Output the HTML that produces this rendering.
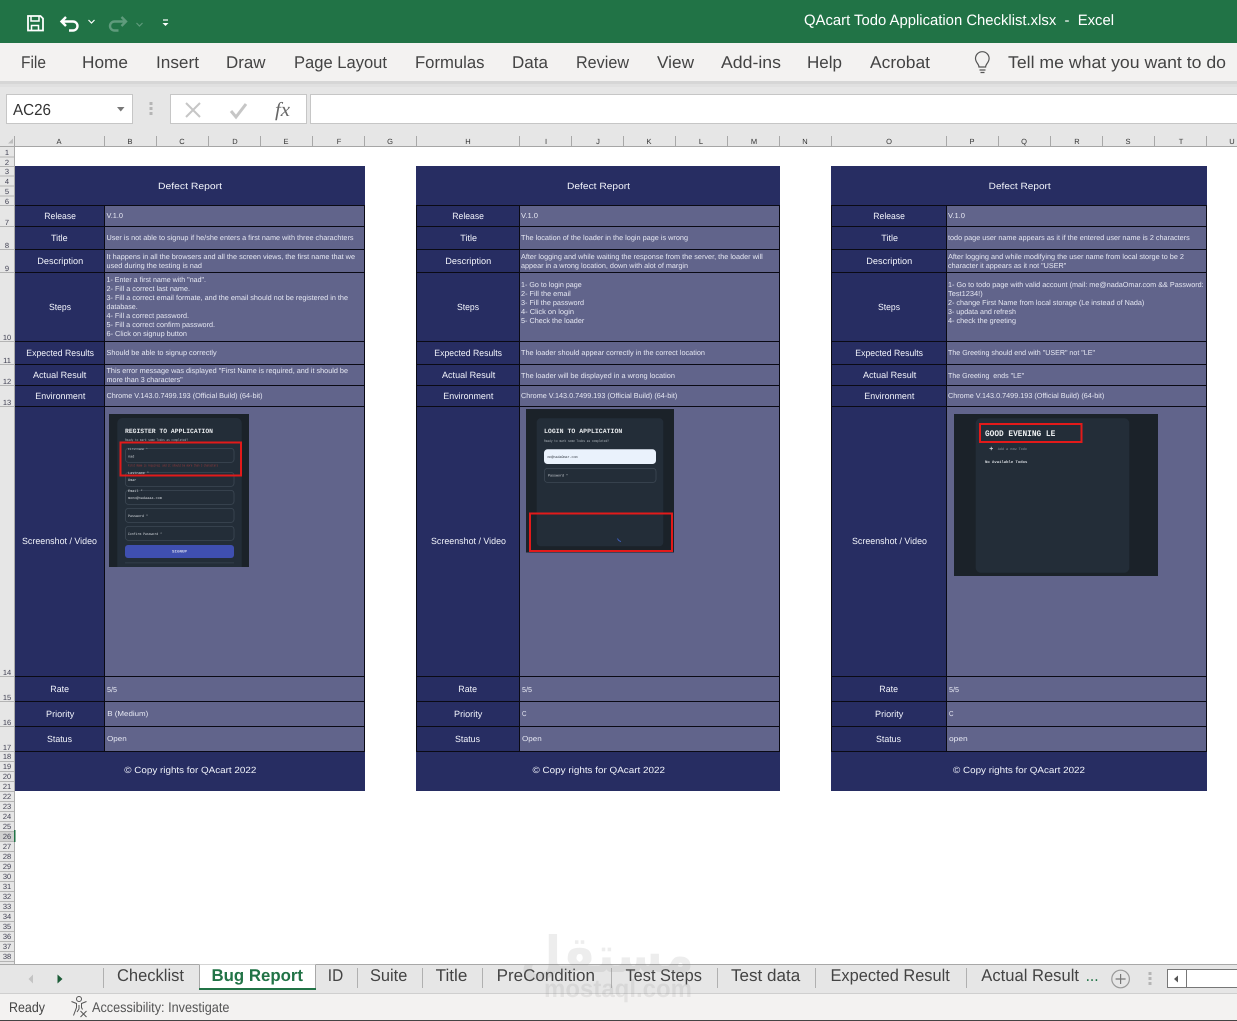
<!DOCTYPE html>
<html lang="en"><head><meta charset="utf-8"><title>QAcart Todo Application Checklist.xlsx - Excel</title>
<style>
html,body{margin:0;padding:0;width:1237px;height:1021px;overflow:hidden;background:#fff}
svg{display:block;font-family:"Liberation Sans",sans-serif;text-rendering:geometricPrecision}
.r{font-size:17px;fill:#444}
.t{font-size:17px;fill:#444}
.c{font-size:7.5px;fill:#333;text-anchor:middle}
.n{font-size:7.5px;fill:#3e3e50;text-anchor:middle}
.v{font-size:7.2px;fill:#e6e8f3}
.l{font-size:9px;fill:#f2f4fb}
.m{font-family:"Liberation Mono",monospace}
</style></head><body>
<svg xmlns="http://www.w3.org/2000/svg" width="1237" height="1021" viewBox="0 0 1237 1021" lengthAdjust="spacingAndGlyphs">
<rect width="1237" height="1021" fill="#fff"/>
<!-- title bar -->
<rect width="1237" height="43" fill="#217346"/>
<g fill="none" stroke="#fff">
<path d="M28 16h12.500l2.500 2.500v12h-15z" stroke-width="1.800"/>
<path d="M31 16v5h8v-5" stroke-width="1.500"/>
<path d="M31.500 31v-5.500h7V31" stroke-width="1.500"/>
<path d="M66 17l-4.500 4.500 4.500 4.500M62 21.500h11a4.500 4.500 0 0 1 0 9h-4" stroke-width="2.400"/>
<path d="M88.500 20l3 3 3-3" stroke-width="1.200"/>
<path d="M121.500 17l4.500 4.500-4.500 4.500M125.500 21.500h-11a4.500 4.500 0 0 0 0 9h4" stroke="#5f9b7c" stroke-width="2.400"/>
<path d="M136.500 23l3 3 3-3" stroke="#5f9b7c" stroke-width="1.200"/>
<path d="M163 20h5" stroke-width="1.200"/>
</g>
<path d="M162.500 23h6l-3 3z" fill="#fff"/>
<text x="804" y="25" font-size="15" fill="#fff" textLength="310" lengthAdjust="spacingAndGlyphs" xml:space="preserve">QAcart Todo Application Checklist.xlsx  -  Excel</text>
<!-- ribbon tabs -->
<rect y="43" width="1237" height="38" fill="#f3f2f1"/>
<rect y="81" width="1237" height="66" fill="#e6e6e6"/>
<rect y="81" width="1237" height="3" fill="#d6d6d6"/>
<rect y="84" width="1237" height="3" fill="#e0e0e0"/>
<g class="r">
<text class="r" x="21" y="68" textLength="25" lengthAdjust="spacingAndGlyphs">File</text>
<text class="r" x="82" y="68" textLength="46" lengthAdjust="spacingAndGlyphs">Home</text>
<text class="r" x="156" y="68" textLength="43" lengthAdjust="spacingAndGlyphs">Insert</text>
<text class="r" x="226" y="68" textLength="39.500" lengthAdjust="spacingAndGlyphs">Draw</text>
<text class="r" x="294" y="68" textLength="93" lengthAdjust="spacingAndGlyphs">Page Layout</text>
<text class="r" x="415" y="68" textLength="69.500" lengthAdjust="spacingAndGlyphs">Formulas</text>
<text class="r" x="512" y="68" textLength="36" lengthAdjust="spacingAndGlyphs">Data</text>
<text class="r" x="576" y="68" textLength="53" lengthAdjust="spacingAndGlyphs">Review</text>
<text class="r" x="657" y="68" textLength="37" lengthAdjust="spacingAndGlyphs">View</text>
<text class="r" x="721" y="68" textLength="60" lengthAdjust="spacingAndGlyphs">Add-ins</text>
<text class="r" x="807" y="68" textLength="35" lengthAdjust="spacingAndGlyphs">Help</text>
<text class="r" x="870" y="68" textLength="60" lengthAdjust="spacingAndGlyphs">Acrobat</text>
<text class="r" x="1008" y="68" textLength="218" lengthAdjust="spacingAndGlyphs" fill="#555">Tell me what you want to do</text>
</g>
<path d="M979 67c0-3-3.500-4.500-3.500-8.500a6.800 6.800 0 0 1 13.600 0c0 4-3.500 5.500-3.500 8.500zM979.500 70h6M980.500 72.500h4" fill="none" stroke="#555" stroke-width="1.200"/>
<!-- formula bar -->
<rect x="6.500" y="94.500" width="126" height="29" fill="#fff" stroke="#c6c6c6"/>
<text x="13" y="115" font-size="16" fill="#333" textLength="38" lengthAdjust="spacingAndGlyphs">AC26</text>
<path d="M117 107h7.500l-3.750 4.500z" fill="#777"/>
<path d="M149.500 102h3v3h-3zM149.500 107h3v3h-3zM149.500 112h3v3h-3z" fill="#b5b5b5"/>
<rect x="170.500" y="94.500" width="136" height="29" fill="#fff" stroke="#c6c6c6"/>
<rect x="310.500" y="94.500" width="927" height="29" fill="#fff" stroke="#c6c6c6"/>
<path d="M186 103l14 14M200 103l-14 14" stroke="#c6c6c6" stroke-width="2" fill="none"/>
<path d="M231 111l5 6 10-13" stroke="#c6c6c6" stroke-width="3" fill="none"/>
<text x="275" y="116" font-family="Liberation Serif" font-style="italic" font-size="20" fill="#666" textLength="15" lengthAdjust="spacingAndGlyphs">fx</text>
<!-- column header -->
<rect y="135" width="1237" height="12" fill="#e6e6e6"/>
<path d="M0 146.500H1237" stroke="#a6a6a6"/>
<path d="M8 143.500h5v-5z" fill="#bdbdbd"/>
<path d="M14.500 136v10M104.500 136v10M156.500 136v10M208.500 136v10M260.500 136v10M312.500 136v10M364.500 136v10M416.500 136v10M519.500 136v10M571.500 136v10M623.500 136v10M675.500 136v10M727.500 136v10M779.500 136v10M831.500 136v10M946.500 136v10M998.500 136v10M1050.500 136v10M1102.500 136v10M1154.500 136v10M1206.500 136v10" stroke="#a8a8a8"/>
<text class="c" x="59" y="144">A</text><text class="c" x="130" y="144">B</text><text class="c" x="182" y="144">C</text><text class="c" x="235" y="144">D</text><text class="c" x="286" y="144">E</text><text class="c" x="339" y="144">F</text><text class="c" x="390" y="144">G</text><text class="c" x="468" y="144">H</text><text class="c" x="546" y="144">I</text><text class="c" x="598" y="144">J</text><text class="c" x="649" y="144">K</text><text class="c" x="701" y="144">L</text><text class="c" x="754" y="144">M</text><text class="c" x="805" y="144">N</text><text class="c" x="889" y="144">O</text><text class="c" x="972" y="144">P</text><text class="c" x="1024" y="144">Q</text><text class="c" x="1077" y="144">R</text><text class="c" x="1128" y="144">S</text><text class="c" x="1181" y="144">T</text><text class="c" x="1232" y="144">U</text>
<!-- row header -->
<rect y="147" width="15" height="817" fill="#e6e6e6"/>
<rect y="832" width="14" height="10" fill="#d0d0d0"/>
<path d="M14.500 147V964" stroke="#ababab"/>
<path d="M0 157h14M0 166.500h14M0 176h14M0 186h14M0 196h14M0 205.500h14M0 226.500h14M0 249.500h14M0 272.500h14M0 341.500h14M0 364.500h14M0 385.500h14M0 406.500h14M0 676.500h14M0 701.500h14M0 726.500h14M0 751.500h14M0 761.500h14M0 771.500h14M0 781.500h14M0 791.500h14M0 801.500h14M0 811.500h14M0 821.500h14M0 831.500h14M0 841.500h14M0 851.500h14M0 861.500h14M0 871.500h14M0 881.500h14M0 891.500h14M0 901.500h14M0 911.500h14M0 921.500h14M0 931.500h14M0 941.500h14M0 951.500h14M0 961.500h14" stroke="#b4b4b4"/>
<rect x="14" y="830" width="1.500" height="12" fill="#217346"/>
<g>
<text class="n" x="7" y="155">1</text><text class="n" x="7" y="165">2</text><text class="n" x="7" y="174">3</text><text class="n" x="7" y="184">4</text><text class="n" x="7" y="194">5</text><text class="n" x="7" y="204">6</text><text class="n" x="7" y="225">7</text><text class="n" x="7" y="248">8</text><text class="n" x="7" y="271">9</text><text class="n" x="7" y="340">10</text><text class="n" x="7" y="363">11</text><text class="n" x="7" y="384">12</text><text class="n" x="7" y="405">13</text><text class="n" x="7" y="675">14</text><text class="n" x="7" y="700">15</text><text class="n" x="7" y="725">16</text><text class="n" x="7" y="750">17</text><text class="n" x="7" y="759">18</text><text class="n" x="7" y="769">19</text><text class="n" x="7" y="779">20</text><text class="n" x="7" y="789">21</text><text class="n" x="7" y="799">22</text><text class="n" x="7" y="809">23</text><text class="n" x="7" y="819">24</text><text class="n" x="7" y="829">25</text><text class="n" x="7" y="839">26</text><text class="n" x="7" y="849">27</text><text class="n" x="7" y="859">28</text><text class="n" x="7" y="869">29</text><text class="n" x="7" y="879">30</text><text class="n" x="7" y="889">31</text><text class="n" x="7" y="899">32</text><text class="n" x="7" y="909">33</text><text class="n" x="7" y="919">34</text><text class="n" x="7" y="929">35</text><text class="n" x="7" y="939">36</text><text class="n" x="7" y="949">37</text><text class="n" x="7" y="959">38</text>
</g>

<!-- Tables backgrounds -->
<rect x="15" y="166" width="350" height="625" fill="#272d62"/>
<rect x="105" y="205" width="260" height="546" fill="#61648b"/>
<rect x="416" y="166" width="364" height="625" fill="#272d62"/>
<rect x="520" y="205" width="260" height="546" fill="#61648b"/>
<rect x="831" y="166" width="376" height="625" fill="#272d62"/>
<rect x="947" y="205" width="260" height="546" fill="#61648b"/>
<path d="M15 205.500H365M15 226.500H365M15 249.500H365M15 272.500H365M15 341.500H365M15 364.500H365M15 385.500H365M15 406.500H365M15 676.500H365M15 701.500H365M15 726.500H365M15 751.500H365M104.500 205V752M364.500 205V752M416 205.500H780M416 226.500H780M416 249.500H780M416 272.500H780M416 341.500H780M416 364.500H780M416 385.500H780M416 406.500H780M416 676.500H780M416 701.500H780M416 726.500H780M416 751.500H780M416.500 205V752M519.500 205V752M779.500 205V752M831 205.500H1207M831 226.500H1207M831 249.500H1207M831 272.500H1207M831 341.500H1207M831 364.500H1207M831 385.500H1207M831 406.500H1207M831 676.500H1207M831 701.500H1207M831 726.500H1207M831 751.500H1207M831.500 205V752M946.500 205V752M1206.500 205V752" stroke="#0a0a14" fill="none"/>

<!-- Table 1 -->
<text class="l" x="158" y="189" font-size="9.500" textLength="64" lengthAdjust="spacingAndGlyphs">Defect Report</text>
<text class="l" x="44.300" y="219" textLength="31.700" lengthAdjust="spacingAndGlyphs">Release</text>
<text class="l" x="51" y="241" textLength="16.700" lengthAdjust="spacingAndGlyphs">Title</text>
<text class="l" x="37.300" y="264" textLength="46" lengthAdjust="spacingAndGlyphs">Description</text>
<text class="l" x="49" y="310" textLength="22" lengthAdjust="spacingAndGlyphs">Steps</text>
<text class="l" x="26.300" y="356" textLength="67.700" lengthAdjust="spacingAndGlyphs">Expected Results</text>
<text class="l" x="33" y="378" textLength="53.300" lengthAdjust="spacingAndGlyphs">Actual Result</text>
<text class="l" x="35.300" y="399" textLength="50" lengthAdjust="spacingAndGlyphs">Environment</text>
<text class="l" x="22" y="544" textLength="75" lengthAdjust="spacingAndGlyphs">Screenshot / Video</text>
<text class="l" x="50.300" y="692" textLength="18.700" lengthAdjust="spacingAndGlyphs">Rate</text>
<text class="l" x="46" y="717" textLength="28.300" lengthAdjust="spacingAndGlyphs">Priority</text>
<text class="l" x="47" y="742" textLength="25" lengthAdjust="spacingAndGlyphs">Status</text>
<text class="l" x="124.300" y="773" textLength="132" lengthAdjust="spacingAndGlyphs">© Copy rights for QAcart 2022</text>
<text class="v" x="106.500" y="218" textLength="16.500" lengthAdjust="spacingAndGlyphs">V.1.0</text>
<text class="v" x="106.500" y="240" textLength="247" lengthAdjust="spacingAndGlyphs">User is not able to signup if he/she enters a first name with three charachters</text>
<text class="v" x="106.500" y="259" textLength="248.500" lengthAdjust="spacingAndGlyphs">It happens in all the browsers and all the screen views, the first name that we</text>
<text class="v" x="106.500" y="268" textLength="95.500" lengthAdjust="spacingAndGlyphs">used during the testing is nad</text>
<text class="v" x="106.500" y="282" textLength="99.500" lengthAdjust="spacingAndGlyphs">1- Enter a first name with "nad".</text>
<text class="v" x="106.500" y="291" textLength="83.500" lengthAdjust="spacingAndGlyphs">2- Fill a correct last name.</text>
<text class="v" x="106.500" y="300" textLength="241.500" lengthAdjust="spacingAndGlyphs">3- Fill a correct email formate, and the email should not be registered in the</text>
<text class="v" x="106.500" y="309" textLength="31.200" lengthAdjust="spacingAndGlyphs">database.</text>
<text class="v" x="106.500" y="318" textLength="82.500" lengthAdjust="spacingAndGlyphs">4- Fill a correct password.</text>
<text class="v" x="106.500" y="327" textLength="108.500" lengthAdjust="spacingAndGlyphs">5- Fill a correct confirm password.</text>
<text class="v" x="106.500" y="336" textLength="80.500" lengthAdjust="spacingAndGlyphs">6- Click on signup button</text>
<text class="v" x="106.500" y="355" textLength="110.200" lengthAdjust="spacingAndGlyphs">Should be able to signup correctly</text>
<text class="v" x="106.500" y="373" textLength="241.500" lengthAdjust="spacingAndGlyphs">This error message was displayed "First Name is required, and it should be</text>
<text class="v" x="106.500" y="382" textLength="76.200" lengthAdjust="spacingAndGlyphs">more than 3 characters"</text>
<text class="v" x="106.500" y="398" textLength="156" lengthAdjust="spacingAndGlyphs">Chrome V.143.0.7499.193 (Official Build) (64-bit)</text>
<text class="v" x="107" y="692" textLength="10" lengthAdjust="spacingAndGlyphs">5/5</text>
<text class="v" x="107.300" y="716" textLength="41" lengthAdjust="spacingAndGlyphs">B (Medium)</text>
<text class="v" x="107" y="741" textLength="19.700" lengthAdjust="spacingAndGlyphs">Open</text>

<!-- Table 2 -->
<text class="l" x="567" y="189" font-size="9.500" textLength="63" lengthAdjust="spacingAndGlyphs">Defect Report</text>
<text class="l" x="452.300" y="219" textLength="31.700" lengthAdjust="spacingAndGlyphs">Release</text>
<text class="l" x="460.300" y="241" textLength="16.700" lengthAdjust="spacingAndGlyphs">Title</text>
<text class="l" x="445.300" y="264" textLength="46" lengthAdjust="spacingAndGlyphs">Description</text>
<text class="l" x="457" y="310" textLength="22" lengthAdjust="spacingAndGlyphs">Steps</text>
<text class="l" x="434.300" y="356" textLength="67.700" lengthAdjust="spacingAndGlyphs">Expected Results</text>
<text class="l" x="442" y="378" textLength="53.300" lengthAdjust="spacingAndGlyphs">Actual Result</text>
<text class="l" x="443.300" y="399" textLength="50" lengthAdjust="spacingAndGlyphs">Environment</text>
<text class="l" x="431" y="544" textLength="75" lengthAdjust="spacingAndGlyphs">Screenshot / Video</text>
<text class="l" x="458.300" y="692" textLength="18.700" lengthAdjust="spacingAndGlyphs">Rate</text>
<text class="l" x="454" y="717" textLength="28.300" lengthAdjust="spacingAndGlyphs">Priority</text>
<text class="l" x="455" y="742" textLength="25" lengthAdjust="spacingAndGlyphs">Status</text>
<text class="l" x="532.500" y="773" textLength="132.500" lengthAdjust="spacingAndGlyphs">© Copy rights for QAcart 2022</text>
<text class="v" x="521" y="218" textLength="17" lengthAdjust="spacingAndGlyphs">V.1.0</text>
<text class="v" x="521" y="240" textLength="167" lengthAdjust="spacingAndGlyphs">The location of the loader in the login page is wrong</text>
<text class="v" x="521" y="259" textLength="241.700" lengthAdjust="spacingAndGlyphs">After logging and while waiting the response from the server, the loader will</text>
<text class="v" x="521" y="268" textLength="167" lengthAdjust="spacingAndGlyphs">appear in a wrong location, down with alot of margin</text>
<text class="v" x="521" y="287" textLength="60.700" lengthAdjust="spacingAndGlyphs">1- Go to login page</text>
<text class="v" x="521" y="296" textLength="49.700" lengthAdjust="spacingAndGlyphs">2- Fill the email</text>
<text class="v" x="521" y="305" textLength="63" lengthAdjust="spacingAndGlyphs">3- Fill the password</text>
<text class="v" x="521" y="314" textLength="53" lengthAdjust="spacingAndGlyphs">4- Click on login</text>
<text class="v" x="521" y="323" textLength="63.300" lengthAdjust="spacingAndGlyphs">5- Check the loader</text>
<text class="v" x="521" y="355" textLength="184" lengthAdjust="spacingAndGlyphs">The loader should appear correctly in the correct location</text>
<text class="v" x="521" y="378" textLength="154" lengthAdjust="spacingAndGlyphs">The loader will be displayed in a wrong location</text>
<text class="v" x="521" y="398" textLength="156.300" lengthAdjust="spacingAndGlyphs">Chrome V.143.0.7499.193 (Official Build) (64-bit)</text>
<text class="v" x="522" y="692" textLength="10" lengthAdjust="spacingAndGlyphs">5/5</text>
<text class="v" x="522" y="716" textLength="4.500" lengthAdjust="spacingAndGlyphs">C</text>
<text class="v" x="522" y="741" textLength="19.700" lengthAdjust="spacingAndGlyphs">Open</text>

<!-- Table 3 -->
<text class="l" x="988.700" y="189" font-size="9.500" textLength="62" lengthAdjust="spacingAndGlyphs">Defect Report</text>
<text class="l" x="873.300" y="219" textLength="31.700" lengthAdjust="spacingAndGlyphs">Release</text>
<text class="l" x="881.300" y="241" textLength="16.700" lengthAdjust="spacingAndGlyphs">Title</text>
<text class="l" x="866.300" y="264" textLength="46" lengthAdjust="spacingAndGlyphs">Description</text>
<text class="l" x="878" y="310" textLength="22" lengthAdjust="spacingAndGlyphs">Steps</text>
<text class="l" x="855.300" y="356" textLength="67.700" lengthAdjust="spacingAndGlyphs">Expected Results</text>
<text class="l" x="863" y="378" textLength="53.300" lengthAdjust="spacingAndGlyphs">Actual Result</text>
<text class="l" x="864.300" y="399" textLength="50" lengthAdjust="spacingAndGlyphs">Environment</text>
<text class="l" x="852" y="544" textLength="75" lengthAdjust="spacingAndGlyphs">Screenshot / Video</text>
<text class="l" x="879.300" y="692" textLength="18.700" lengthAdjust="spacingAndGlyphs">Rate</text>
<text class="l" x="875" y="717" textLength="28.300" lengthAdjust="spacingAndGlyphs">Priority</text>
<text class="l" x="876" y="742" textLength="25" lengthAdjust="spacingAndGlyphs">Status</text>
<text class="l" x="953" y="773" textLength="132" lengthAdjust="spacingAndGlyphs">© Copy rights for QAcart 2022</text>
<text class="v" x="948" y="218" textLength="17" lengthAdjust="spacingAndGlyphs">V.1.0</text>
<text class="v" x="948" y="240" textLength="241.700" lengthAdjust="spacingAndGlyphs">todo page user name appears as it if the entered user name is 2 characters</text>
<text class="v" x="948" y="259" textLength="236" lengthAdjust="spacingAndGlyphs">After logging and while modifying the user name from local storge to be 2</text>
<text class="v" x="948" y="268" textLength="118.300" lengthAdjust="spacingAndGlyphs">character it appears as it not "USER"</text>
<text class="v" x="948" y="287" textLength="255.700" lengthAdjust="spacingAndGlyphs">1- Go to todo page with valid account (mail: me@nadaOmar.com &amp;&amp; Password:</text>
<text class="v" x="948" y="296" textLength="34.700" lengthAdjust="spacingAndGlyphs">Test1234!)</text>
<text class="v" x="948" y="305" textLength="196.300" lengthAdjust="spacingAndGlyphs">2- change First Name from local storage (Le instead of Nada)</text>
<text class="v" x="948" y="314" textLength="68" lengthAdjust="spacingAndGlyphs">3- updata and refresh</text>
<text class="v" x="948" y="323" textLength="68" lengthAdjust="spacingAndGlyphs">4- check the greeting</text>
<text class="v" x="948" y="355" textLength="147" lengthAdjust="spacingAndGlyphs">The Greeting should end with "USER" not "LE"</text>
<text class="v" x="948" y="378" textLength="76.300" lengthAdjust="spacingAndGlyphs" xml:space="preserve">The Greeting  ends "LE"</text>
<text class="v" x="948" y="398" textLength="156.300" lengthAdjust="spacingAndGlyphs">Chrome V.143.0.7499.193 (Official Build) (64-bit)</text>
<text class="v" x="949" y="692" textLength="10" lengthAdjust="spacingAndGlyphs">5/5</text>
<text class="v" x="949" y="716" textLength="4.500" lengthAdjust="spacingAndGlyphs">C</text>
<text class="v" x="949" y="741" textLength="18.700" lengthAdjust="spacingAndGlyphs">open</text>

<!-- Screenshot 1 -->
<rect x="109" y="414" width="140" height="153" fill="#1b2229"/>
<path d="M117.300 567V423a5 5 0 0 1 5-5h114.400a5 5 0 0 1 5 5v144z" fill="#232d38"/>
<text class="m" x="125" y="433" font-size="6.500" font-weight="bold" fill="#e4e7ea" textLength="88" lengthAdjust="spacingAndGlyphs">REGISTER TO APPLICATION</text>
<text class="m" x="125" y="441" font-size="3.500" fill="#aeb5bc" textLength="63" lengthAdjust="spacingAndGlyphs">Ready to mark some Todos as completed?</text>
<g fill="none" stroke="#3d4854" stroke-width=".8">
<rect x="125.400" y="448.400" width="108.600" height="14" rx="3"/>
<rect x="125.400" y="472.400" width="108.600" height="14" rx="3"/>
<rect x="125.400" y="490.400" width="108.600" height="14" rx="3"/>
<rect x="125.400" y="508.400" width="108.600" height="14" rx="3"/>
<rect x="125.400" y="526.400" width="108.600" height="14" rx="3"/>
</g>
<g class="m" font-size="3.500" fill="#d5d9de">
<text class="m" x="128" y="450" fill="#bcc3ca" font-size="3">Firstname *</text>
<text class="m" x="128" y="457.500">nad</text>
<text class="m" x="128" y="466.500" fill="#a33b3b" textLength="90" lengthAdjust="spacingAndGlyphs">First Name is required, and it should be more than 3 characters</text>
<text class="m" x="128" y="474">Lastname *</text>
<text class="m" x="128" y="480.800">Omar</text>
<text class="m" x="128" y="492">Email *</text>
<text class="m" x="128" y="498.800" textLength="34" lengthAdjust="spacingAndGlyphs">mono@nadaaaa.com</text>
<text class="m" x="128" y="516.800" textLength="20" lengthAdjust="spacingAndGlyphs">Password *</text>
<text class="m" x="128" y="534.800" textLength="34" lengthAdjust="spacingAndGlyphs">Confirm Password *</text>
</g>
<rect x="125" y="545" width="109" height="13" rx="3" fill="#3f4fb0"/>
<text class="m" x="172" y="552.500" font-size="3.800" font-weight="bold" fill="#d5d9ee" textLength="15" lengthAdjust="spacingAndGlyphs">SIGNUP</text>
<rect x="125" y="562" width="109" height="1.500" fill="#2d3844"/>
<rect x="120.500" y="442.500" width="120.500" height="33" fill="none" stroke="#e21a1a" stroke-width="2"/>

<!-- Screenshot 2 -->
<rect x="526" y="409" width="148" height="143.500" fill="#1b2229"/>
<rect x="536.700" y="418.300" width="126.600" height="128" rx="4" fill="#232d38"/>
<text class="m" x="544" y="433" font-size="6.500" font-weight="bold" fill="#e4e7ea" textLength="78.300" lengthAdjust="spacingAndGlyphs">LOGIN TO APPLICATION</text>
<text class="m" x="544" y="442" font-size="3.500" fill="#aeb5bc" textLength="65" lengthAdjust="spacingAndGlyphs">Ready to mark some Todos as completed?</text>
<rect x="544" y="449.300" width="112" height="14.700" rx="3.500" fill="#eaf2fc"/>
<text class="m" x="547.500" y="458" font-size="3.500" fill="#333a44" textLength="30" lengthAdjust="spacingAndGlyphs">mo@nadaOmar.com</text>
<rect x="544.400" y="468.400" width="111.600" height="14" rx="3" fill="none" stroke="#3d4854" stroke-width=".8"/>
<text class="m" x="548" y="476.500" font-size="3.500" fill="#d5d9de" textLength="20" lengthAdjust="spacingAndGlyphs">Password *</text>
<path d="M617.500 538.500q1 2.500 3.500 3" fill="none" stroke="#3f5fc0" stroke-width="1"/>
<rect x="530" y="513.500" width="142" height="37.500" fill="none" stroke="#e21a1a" stroke-width="2"/>

<!-- Screenshot 3 -->
<rect x="954" y="414" width="204" height="162" fill="#1b2229"/>
<rect x="975.700" y="418.300" width="153.600" height="154.400" rx="5" fill="#232d38"/>
<text class="m" x="985" y="436" font-size="8.500" font-weight="bold" fill="#eceef0" textLength="70.300" lengthAdjust="spacingAndGlyphs">GOOD EVENING LE</text>
<rect x="980" y="424" width="101.500" height="18" fill="none" stroke="#e21a1a" stroke-width="2"/>
<path d="M989.500 448.500h3.500M991.250 446.700v3.500" stroke="#d5d9de" stroke-width=".8" fill="none"/>
<text class="m" x="997.700" y="449.800" font-size="3.500" fill="#8c949c" textLength="29.300" lengthAdjust="spacingAndGlyphs">Add a new Todo</text>
<text class="m" x="985" y="463" font-size="3.800" font-weight="bold" fill="#d5d9de" textLength="42.300" lengthAdjust="spacingAndGlyphs">No Available Todos</text>

<!-- sheet tabs -->
<rect y="964" width="1237" height="29" fill="#e6e6e6"/>
<path d="M0 964.500H1237" stroke="#a8a8a8"/>
<rect y="993" width="1237" height="27" fill="#f3f2f1"/>
<path d="M0 993.500H1237" stroke="#cfcfcf"/>
<path d="M0 1020.500H1237" stroke="#444"/>
<path d="M33 974.500v9l-4.500-4.500z" fill="#c4c4c4"/>
<path d="M57.500 974.500v9l5-4.500z" fill="#1c5c38"/>
<path d="M103.500 968v20M357.500 968v20M422.500 968v20M482.500 968v20M611.500 968v20M717.500 968v20M815.500 968v20M966.500 968v20" stroke="#b0b0b0"/>
<path d="M199.500 964.500h116v25h-116z" fill="#fff"/>
<path d="M199.500 965v23M315.500 965v23" stroke="#a8a8a8"/>
<rect x="199" y="988" width="117" height="2" fill="#217346"/>
<text class="t" x="117" y="981" textLength="67" lengthAdjust="spacingAndGlyphs">Checklist</text>
<text x="211.500" y="981" font-size="17" font-weight="bold" fill="#217346" textLength="91.500" lengthAdjust="spacingAndGlyphs">Bug Report</text>
<text class="t" x="327.800" y="981" textLength="15.400" lengthAdjust="spacingAndGlyphs">ID</text>
<text class="t" x="370" y="981" textLength="37.300" lengthAdjust="spacingAndGlyphs">Suite</text>
<text class="t" x="435.700" y="981" textLength="31.700" lengthAdjust="spacingAndGlyphs">Title</text>
<text class="t" x="496.600" y="981" textLength="98.400" lengthAdjust="spacingAndGlyphs">PreCondition</text>
<text class="t" x="625.500" y="981" textLength="76.400" lengthAdjust="spacingAndGlyphs">Test Steps</text>
<text class="t" x="731" y="981" textLength="69.200" lengthAdjust="spacingAndGlyphs">Test data</text>
<text class="t" x="830.500" y="981" textLength="119.300" lengthAdjust="spacingAndGlyphs">Expected Result</text>
<text class="t" x="981.300" y="981" textLength="97.700" lengthAdjust="spacingAndGlyphs">Actual Result</text>
<text x="1085.600" y="981" font-size="17" fill="#217346" textLength="13" lengthAdjust="spacingAndGlyphs">...</text>
<circle cx="1120.600" cy="979" r="8.800" fill="none" stroke="#999" stroke-width="1.200"/>
<path d="M1115.600 979h10M1120.600 974v10" stroke="#777" stroke-width="1.200"/>
<path d="M1148.500 972h3v3h-3zM1148.500 977h3v3h-3zM1148.500 982h3v3h-3z" fill="#b5b5b5"/>
<rect x="1167.500" y="969.500" width="70" height="18" fill="#fff" stroke="#777"/>
<path d="M1186.500 970v17" stroke="#777"/>
<path d="M1178 975.500v7l-4-3.500z" fill="#555"/>

<!-- status bar -->
<text x="9" y="1012" font-size="14" fill="#444" textLength="36" lengthAdjust="spacingAndGlyphs">Ready</text>
<g fill="none" stroke="#555" stroke-width="1">
<circle cx="79" cy="999" r="2.500"/>
<path d="M71.500 1001.500l5 2v4l-3 8M86.500 1001.500l-5 2v4l1 2"/>
<path d="M79 1005v4l-2 3M80.500 1011l6 6M86.500 1011l-6 6"/>
</g>
<text x="92" y="1012" font-size="14" fill="#555" textLength="137.400" lengthAdjust="spacingAndGlyphs">Accessibility: Investigate</text>

<!-- watermark -->
<g opacity=".15" fill="#8a8a8a" font-weight="bold">
<text transform="translate(607 972) scale(.95 1)" text-anchor="middle" font-family="DejaVu Sans" font-size="50">مستقل</text>
<text x="544" y="997" font-family="Liberation Sans" font-size="25" textLength="148" lengthAdjust="spacingAndGlyphs">mostaql.com</text>
</g>
</svg>
</body></html>
